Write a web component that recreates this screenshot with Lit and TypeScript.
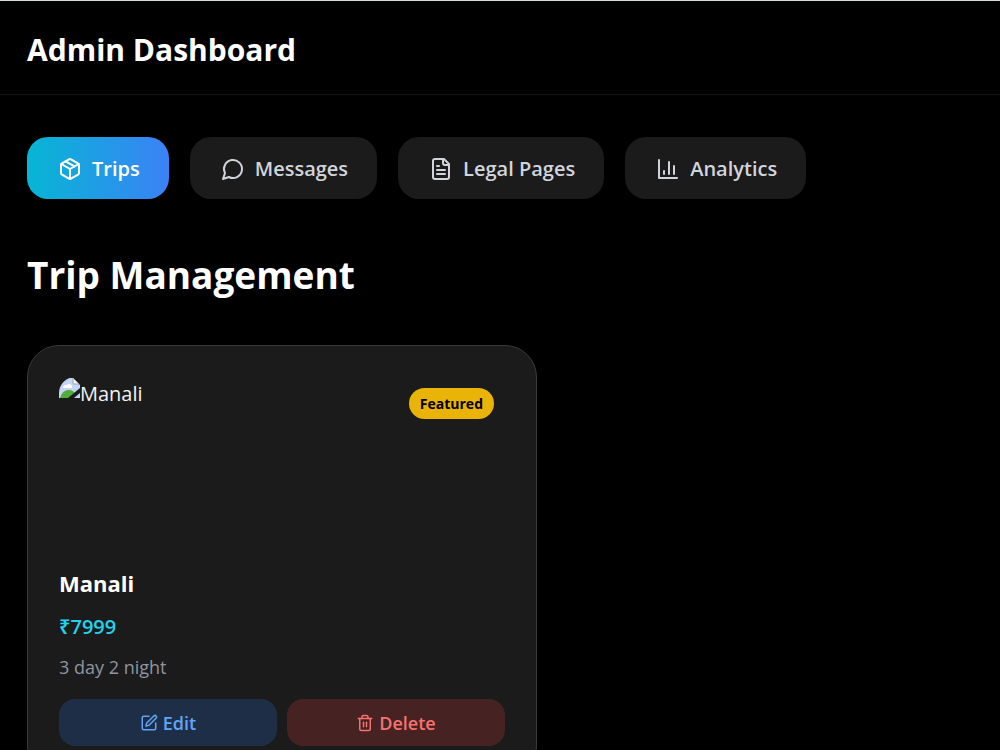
import { LitElement, html, css, svg } from "lit";
import { customElement, property, state } from "lit/decorators.js";
import { classMap } from "lit/directives/class-map.js";

const icons = {
  trips: svg`<path d="m7.5 4.27 9 5.15"/><path d="M21 8a2 2 0 0 0-1-1.73l-7-4a2 2 0 0 0-2 0l-7 4A2 2 0 0 0 3 8v8a2 2 0 0 0 1 1.73l7 4a2 2 0 0 0 2 0l7-4A2 2 0 0 0 21 16Z"/><path d="m3.3 7 8.7 5 8.7-5"/><path d="M12 22V12"/>`,
  messages: svg`<path d="M7.9 20A9 9 0 1 0 4 16.1L2 22Z"/>`,
  legal: svg`<path d="M15 2H6a2 2 0 0 0-2 2v16a2 2 0 0 0 2 2h12a2 2 0 0 0 2-2V7Z"/><path d="M14 2v4a2 2 0 0 0 2 2h4"/><path d="M10 9H8"/><path d="M16 13H8"/><path d="M16 17H8"/>`,
  analytics: svg`<path d="M3 3v18h18"/><path d="M18 17V9"/><path d="M13 17V5"/><path d="M8 17v-3"/>`,
  edit: svg`<path d="M12 3H5a2 2 0 0 0-2 2v14a2 2 0 0 0 2 2h14a2 2 0 0 0 2-2v-7"/><path d="M18.375 2.625a1 1 0 0 1 3 3l-9.013 9.014a2 2 0 0 1-.853.505l-2.873.84a.5.5 0 0 1-.62-.62l.84-2.873a2 2 0 0 1 .506-.852z"/>`,
  trash: svg`<path d="M3 6h18"/><path d="M19 6v14c0 1-1 2-2 2H7c-1 0-2-1-2-2V6"/><path d="M8 6V4c0-1 1-2 2-2h4c1 0 2 1 2 2v2"/><path d="M10 11v6"/><path d="M14 11v6"/>`,
};

type IconName = keyof typeof icons;

const icon = (name: IconName) => html`<svg
  class="icon"
  viewBox="0 0 24 24"
  aria-hidden="true"
>${icons[name]}</svg>`;

interface Trip {
  title: string;
  price: number;
  duration: string;
  featured: boolean;
}

const TABS: { id: IconName; label: string }[] = [
  { id: "trips", label: "Trips" },
  { id: "messages", label: "Messages" },
  { id: "legal", label: "Legal Pages" },
  { id: "analytics", label: "Analytics" },
];

const TRIPS: Trip[] = [
  { title: "Manali", price: 7999, duration: "3 day 2 night", featured: true },
];

const shared = css`
  * {
    box-sizing: border-box;
  }
  h1, h2, h3, p, figure {
    margin: 0;
  }
  button {
    border: 0;
    font: inherit;
    cursor: pointer;
  }
  .icon {
    flex: none;
    fill: none;
    stroke: currentColor;
    stroke-width: 2;
    stroke-linecap: round;
    stroke-linejoin: round;
  }
`;

@customElement("trip-card")
export class TripCard extends LitElement {
  @property({ attribute: false }) trip!: Trip;

  static styles = [
    shared,
    css`
      :host {
        display: block;
      }
      .card {
        padding: 31px;
        border: 1px solid #3a3a3a;
        border-radius: 32px;
        background: #1b1b1b;
      }
      .photo {
        position: relative;
        display: flex;
        align-items: flex-start;
        height: 182px;
        margin-bottom: 8px;
        border-radius: 16px;
        overflow: hidden;
        color: #f2f2f2;
        font-size: 20px;
        line-height: 34px;
      }
      .missing {
        flex: none;
        width: 21px;
        height: 21px;
      }
      .badge {
        position: absolute;
        top: 11px;
        right: 11px;
        padding: 0 11px;
        border-radius: 16px;
        background: #eab308;
        color: #000;
        font-size: 14px;
        font-weight: 700;
        line-height: 31px;
      }
      .title {
        font-size: 22px;
        font-weight: 700;
        line-height: 32px;
      }
      .price {
        margin-top: 12px;
        color: #22d3ee;
        font-size: 20px;
        font-weight: 600;
        line-height: 32px;
      }
      .duration {
        margin-top: 11px;
        color: #9095a0;
        font-size: 18px;
        line-height: 26px;
      }
      .actions {
        display: grid;
        grid-template-columns: 1fr 1fr;
        gap: 10px;
        margin-top: 19px;
      }
      .action {
        display: flex;
        align-items: center;
        justify-content: center;
        gap: 5px;
        height: 47px;
        border-radius: 16px;
        font-size: 18px;
        font-weight: 600;
      }
      .action .icon {
        width: 18px;
        height: 18px;
      }
      .edit {
        background: #1f2e47;
        color: #60a5fa;
      }
      .delete {
        background: #462222;
        color: #f87171;
      }
    `,
  ];

  render() {
    const { title, price, duration, featured } = this.trip;
    return html`
      <article class="card">
        <figure class="photo">
          <svg class="missing" viewBox="0 0 21 21" aria-hidden="true">
            <path d="M0 1h14l7 7v13H0z" fill="#c3d6f6" />
            <path d="M4 11a3 3 0 0 1 4-3 3 3 0 0 1 5 3z" fill="#fff" />
            <path d="M1 21c2-6 5-8 9-8 3 0 4 1 6 3l-6 5z" fill="#50ad3a" />
            <path d="M9 21 21 11v5l-6 5z" fill="#1b1b1b" />
            <path d="M14 1v6h6z" fill="#f5f5f5" stroke="#a4a4a4" />
          </svg>
          <span>${title}</span>
          ${featured ? html`<span class="badge">Featured</span>` : null}
        </figure>
        <h3 class="title">${title}</h3>
        <p class="price">₹${price}</p>
        <p class="duration">${duration}</p>
        <div class="actions">
          <button class="action edit" type="button">${icon("edit")}Edit</button>
          <button class="action delete" type="button">${icon("trash")}Delete</button>
        </div>
      </article>
    `;
  }
}

@customElement("app-root")
export class AppRoot extends LitElement {
  @state() private tab: IconName = "trips";

  static styles = [
    shared,
    css`
      :host {
        display: block;
        min-height: 100vh;
        border-top: 1px solid #d5dedb;
        background: #000;
        color: #fff;
        font-family: "Segoe UI", "Open Sans", "Noto Sans", sans-serif;
      }
      .header {
        padding: 28px 27px 23px;
        border-bottom: 1px solid #141414;
      }
      .brand {
        font-size: 30px;
        font-weight: 700;
        line-height: 42px;
      }
      .main {
        padding: 42px 27px;
      }
      .tabs {
        display: flex;
        flex-wrap: wrap;
        gap: 21px;
      }
      .tab {
        display: flex;
        align-items: center;
        gap: 10px;
        height: 62px;
        padding: 1px 29px 0 31px;
        border-radius: 21px;
        background: #1b1b1b;
        color: #d1d5db;
        font-size: 20px;
        font-weight: 600;
      }
      .tab .icon {
        width: 24px;
        height: 24px;
      }
      .active {
        background: linear-gradient(to right, #06b6d4, #3b82f6);
        color: #fff;
      }
      .heading {
        margin: 49px 0 44px;
        font-size: 37px;
        font-weight: 700;
        line-height: 53px;
      }
      .grid {
        display: grid;
        grid-template-columns: repeat(auto-fill, minmax(min(100%, 510px), 510px));
        gap: 32px;
      }
    `,
  ];

  render() {
    return html`
      <header class="header"><h1 class="brand">Admin Dashboard</h1></header>
      <main class="main">
        <nav class="tabs">
          ${TABS.map(
            ({ id, label }) => html`<button
              type="button"
              class=${classMap({ tab: true, active: id === this.tab })}
              @click=${() => (this.tab = id)}
            >${icon(id)}${label}</button>`,
          )}
        </nav>
        <h2 class="heading">Trip Management</h2>
        <section class="grid">
          ${TRIPS.map((trip) => html`<trip-card .trip=${trip}></trip-card>`)}
        </section>
      </main>
    `;
  }
}
